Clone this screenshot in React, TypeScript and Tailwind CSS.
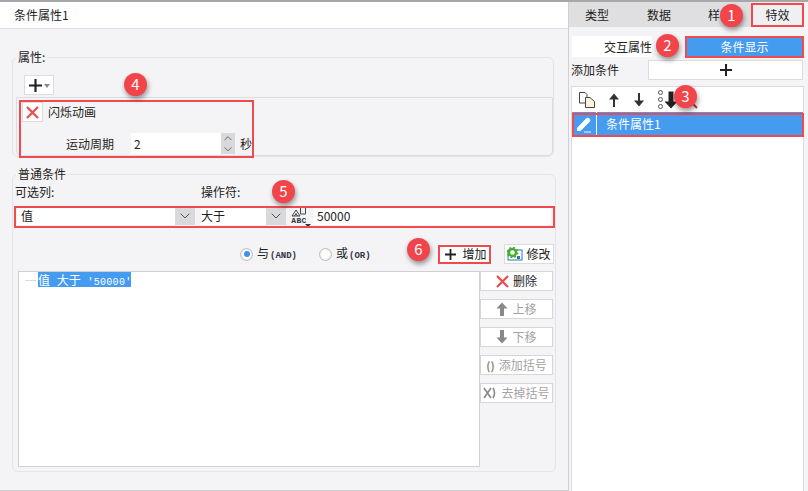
import { ChevronDown, ChevronUp } from "lucide-react";
import type { ReactNode } from "react";

const FONT = { fontFamily: '"Noto Sans CJK SC", "Liberation Sans", sans-serif' };
const MONO = { fontFamily: '"Liberation Mono", monospace' };

const BADGES = [
  { n: 1, cls: "left-[720px] top-[4px]" },
  { n: 2, cls: "left-[656px] top-[34px]" },
  { n: 3, cls: "left-[674px] top-[85px]" },
  { n: 4, cls: "left-[124px] top-[73px]" },
  { n: 5, cls: "left-[272px] top-[180px]" },
  { n: 6, cls: "left-[407px] top-[238px]" },
];

const RED_BOXES = [
  "left-[751px] top-[3px] w-[53px] h-[24px]",
  "left-[685px] top-[36px] w-[119px] h-[22px]",
  "left-[572px] top-[113px] w-[232px] h-[24px]",
  "left-[19px] top-[100px] w-[235px] h-[58px]",
  "left-[14px] top-[206px] w-[541px] h-[22px]",
  "left-[438px] top-[245px] w-[53px] h-[19px]",
];

function Cross({ size = 12 }: { size?: number }) {
  return (
    <svg width={size} height={size} viewBox="0 0 12 12">
      <path d="M6 0 V12 M0 6 H12" stroke="#222" strokeWidth="2" />
    </svg>
  );
}

function RedX({ size = 13 }: { size?: number }) {
  return (
    <svg width={size} height={size} viewBox="0 0 13 13">
      <path d="M1 1 L12 12 M12 1 L1 12" stroke="#ee4b4b" strokeWidth="2.2" />
    </svg>
  );
}

function ArrowUp({ color = "#333", thin }: { color?: string; thin?: boolean }) {
  return (
    <svg width="12" height="14" viewBox="0 0 12 14">
      <path d={thin ? "M6 0.5 L11 6.5 H7 V14 H5 V6.5 H1 Z" : "M6 0.5 L11.5 6.5 H8 V14 H4 V6.5 H0.5 Z"} fill={color} />
    </svg>
  );
}

function ArrowDown({ color = "#333", thin }: { color?: string; thin?: boolean }) {
  return (
    <svg width="12" height="14" viewBox="0 0 12 14">
      <path d={thin ? "M6 13.5 L11 7.5 H7 V0 H5 V7.5 H1 Z" : "M6 13.5 L11.5 7.5 H8 V0 H4 V7.5 H0.5 Z"} fill={color} />
    </svg>
  );
}

function SideButton({ icon, label, off }: { icon: ReactNode; label: string; off?: boolean }) {
  return (
    <div
      className={`flex h-[20px] w-[73px] items-center justify-center gap-[4px] border border-[#d6d6d9] bg-white text-[12px] ${
        off ? "text-[#a3a3a3]" : "text-[#222]"
      }`}
    >
      {icon}
      <span>{label}</span>
    </div>
  );
}

function Group({ title, className, children }: { title: string; className: string; children: ReactNode }) {
  return (
    <div className={`relative rounded-[6px] border border-[#e4e4e7] ${className}`}>
      <span className="absolute left-[3px] top-[-9px] bg-[#f4f4f6] px-[2px] text-[12px] leading-[16px] text-[#222]">
        {title}
      </span>
      {children}
    </div>
  );
}

function SelectBox({ value, className }: { value: string; className: string }) {
  return (
    <div className={`flex h-[19px] items-center justify-between bg-white text-[12px] text-[#222] ${className}`}>
      <span>{value}</span>
      <div className="flex h-full w-[20px] items-center justify-center bg-[#d9d9dc]">
        <ChevronDown size={16} strokeWidth={1.5} className="text-[#555]" />
      </div>
    </div>
  );
}

function Radio({ on }: { on?: boolean }) {
  return (
    <div className="flex h-[13px] w-[13px] items-center justify-center rounded-full border border-[#bdbdbd] bg-[radial-gradient(circle,#ffffff_40%,#e2e2e4)]">
      {on && <span className="h-[6px] w-[6px] rounded-full bg-[#3f90ec]" />}
    </div>
  );
}

export default function App() {
  return (
    <div style={FONT} className="relative flex h-[491px] w-[808px] flex-col overflow-hidden bg-[#f4f4f6]">
      <div className="h-[2px] bg-[#a8a8a8]" />
      <div className="flex flex-1">
        {/* left panel */}
        <div className="flex w-[569px] flex-col border-b border-r border-[#d0d0d3]">
          <div className="flex h-[27px] items-center border-b border-[#dcdcdf] bg-white pl-[14px] text-[12px] text-[#222]">
            条件属性1
          </div>
          <div className="px-[12px] pt-[28px]">
            <Group title="属性:" className="h-[100px] w-[542px]">
              <div className="ml-[11px] mt-[17px] flex h-[20px] w-[30px] items-center justify-center border border-[#dcdcdf] bg-white">
                <Cross size={13} />
                <span className="ml-[2px] mt-[1px] h-0 w-0 border-x-[3px] border-t-[4px] border-x-transparent border-t-[#888]" />
              </div>
              <div className="mt-[2px] ml-[3px] h-[59px] rounded-b-[5px] border border-[#dcdcdf]">
                <div className="flex items-center pl-[5px] pt-[4px]">
                  <div className="flex h-[20px] w-[21px] items-center justify-center border border-[#dcdcdf] bg-white">
                    <RedX />
                  </div>
                  <span className="ml-[5px] text-[12px] text-[#222]">闪烁动画</span>
                </div>
                <div className="mt-[11px] flex items-center pl-[49px] text-[12px] text-[#222]">
                  <span className="w-[65px]">运动周期</span>
                  <div className="flex h-[21px] w-[104px] items-center justify-between bg-white">
                    <span className="pl-[3px]">2</span>
                    <div className="flex h-full w-[14px] flex-col items-center justify-center bg-[#d9d9dc]">
                      <ChevronUp size={14} strokeWidth={1.6} className="-my-[1px] text-[#555]" />
                      <ChevronDown size={14} strokeWidth={1.6} className="-my-[1px] text-[#555]" />
                    </div>
                  </div>
                  <span className="ml-[5px]">秒</span>
                </div>
              </div>
            </Group>

            <Group title="普通条件" className="mt-[17px] h-[298px] w-[544px]">
              <div className="flex pl-[2px] pt-[9px] text-[12px] leading-[16px] text-[#222]">
                <span className="w-[186px]">可选列:</span>
                <span>操作符:</span>
              </div>
              <div className="mt-[6px] flex items-center pl-[4px]">
                <SelectBox value="值" className="w-[178px] pl-[4px]" />
                <SelectBox value="大于" className="ml-[6px] w-[85px]" />
                <div className="relative flex h-[19px] w-[26px] flex-col items-center justify-center text-[#333]">
                  <svg width="16" height="10" viewBox="0 0 16 10">
                    <path d="M1 9 L5 3 L9 9 Z M3.5 9 L5 6.5 L6.5 9" fill="none" stroke="#444" />
                    <path d="M9.5 1 V7 H14.5 V1" fill="none" stroke="#444" />
                  </svg>
                  <span style={MONO} className="text-[8px] font-bold leading-[7px] tracking-[0.4px]">
                    ABC
                  </span>
                  <span className="absolute bottom-[-2px] right-[1px] h-0 w-0 border-x-[3px] border-t-[3px] border-x-transparent border-t-[#333]" />
                </div>
                <div className="ml-[1px] flex h-[19px] w-[238px] items-center bg-white pl-[4px] text-[12px] text-[#222]">
                  50000
                </div>
              </div>

              <div className="mt-[19px] flex h-[20px] items-center text-[12px] text-[#222]">
                <div className="ml-[227px]">
                  <Radio on />
                </div>
                <span className="ml-[4px] w-[62px]">
                  与<span style={MONO} className="ml-[1px] text-[9px] font-bold text-[#334]">(AND)</span>
                </span>
                <Radio />
                <span className="ml-[4px] w-[104px]">
                  或<span style={MONO} className="ml-[1px] text-[9px] font-bold text-[#334]">(OR)</span>
                </span>
                <div className="flex h-[20px] w-[52px] items-center justify-center gap-[6px] bg-white">
                  <Cross size={11} />
                  <span>增加</span>
                </div>
                <div className="ml-[12px] flex h-[20px] w-[50px] items-center justify-center gap-[3px] border border-[#dcdcdf] bg-white">
                  <svg width="16" height="14" viewBox="0 0 16 14">
                    <rect x="1" y="3" width="14" height="10" fill="#fff" stroke="#2f73b8" />
                    <rect x="10" y="9" width="3" height="3" fill="#2f73b8" />
                    <circle cx="5.5" cy="5.5" r="3.5" fill="#fff" stroke="#43b02a" strokeWidth="2.4" />
                    <circle cx="5.5" cy="5.5" r="5" fill="none" stroke="#43b02a" strokeWidth="1.6" strokeDasharray="2 1.9" />
                  </svg>
                  <span>修改</span>
                </div>
              </div>

              <div className="mt-[7px] flex pl-[5px]">
                <div className="flex h-[196px] w-[462px] items-start border border-[#d0d0d3] bg-white text-[12px]">
                  <span className="ml-[6px] mr-[2px] mt-[8px] h-px w-[11px] bg-[#dcdcdf]" />
                  <span className="block h-[15px] w-[93px] whitespace-pre bg-[#459bf0] leading-[15px] text-white [word-spacing:4px]">
                    值 大于 <span style={MONO} className="text-[10px] tracking-[0.3px]">'50000'</span>
                  </span>
                </div>
                <div className="flex flex-col gap-[8px]">
                  <SideButton icon={<RedX />} label="删除" />
                  <SideButton icon={<ArrowUp color="#888" />} label="上移" off />
                  <SideButton icon={<ArrowDown color="#888" />} label="下移" off />
                  <SideButton
                    icon={<span className="text-[11px] font-bold text-[#888]">()</span>}
                    label="添加括号"
                    off
                  />
                  <SideButton
                    icon={
                      <svg width="14" height="12" viewBox="0 0 14 12">
                        <path d="M1 1 L8 11 M8 1 L1 11 M10 1 Q13 6 10 11" fill="none" stroke="#888" strokeWidth="1.6" />
                      </svg>
                    }
                    label="去掉括号"
                    off
                  />
                </div>
              </div>
            </Group>
          </div>
        </div>

        {/* right panel */}
        <div className="flex w-[235px] flex-col text-[12px] text-[#222]">
          <div className="flex h-[25px] items-center bg-[#dfdfe2] pl-[3px]">
            <span className="w-[50px] text-center">类型</span>
            <span className="w-[74px] text-center">数据</span>
            <span className="w-[48px] text-center">样式</span>
            <span className="ml-[7px] flex h-full w-[53px] items-center justify-center bg-[#f0f0f2]">特效</span>
          </div>
          <div className="ml-[3px] mt-[9px] flex h-[21px] items-center">
            <span className="w-[80px] bg-white text-right leading-[21px]">交互属性</span>
            <div className="ml-[33px] flex h-full w-[119px] items-center justify-center bg-[#459bf0] text-white">
              条件显示
            </div>
          </div>
          <div className="ml-[2px] mt-[3px] flex h-[20px] items-center">
            <span className="w-[77px]">添加条件</span>
            <div className="flex h-full w-[155px] items-center justify-center border border-[#dcdcdf] bg-white">
              <Cross />
            </div>
          </div>
          <div className="ml-[2px] mt-[6px] flex-1 border border-b-0 border-[#dcdcdf] bg-white">
            <div className="flex h-[25px] items-center gap-[13px] pl-[7px]">
              <svg width="16" height="16" viewBox="0 0 16 16">
                <path d="M0.5 0.5 H6 L8 2.5 V11 H0.5 Z" fill="#fff" stroke="#444" />
                <path d="M6.5 5.5 H11 L15.5 9.5 V15.5 H6.5 Z" fill="#fdf3dc" stroke="#444" />
              </svg>
              <ArrowUp thin />
              <ArrowDown thin />
              <div className="flex items-center">
                <div className="flex flex-col gap-[2px]">
                  <span className="h-[5px] w-[5px] rounded-full border border-[#555]" />
                  <span className="h-[5px] w-[5px] rounded-full border border-[#555]" />
                  <span className="h-[5px] w-[5px] rounded-full border border-[#555]" />
                </div>
                <svg width="14" height="18" viewBox="0 0 14 18" className="ml-[1px]">
                  <path d="M7 17.5 L13.5 10.5 H9.5 V0.5 H4.5 V10.5 H0.5 Z" fill="#222" />
                </svg>
                <svg width="20" height="18" viewBox="0 0 20 18" className="ml-[1px]">
                  <circle cx="8" cy="8" r="6" fill="none" stroke="#888" strokeWidth="1.5" />
                  <path d="M14 13 L18 17" stroke="#c0392b" strokeWidth="2" />
                </svg>
              </div>
            </div>
            <div className="flex h-[24px] items-center bg-[#459bf0] text-white">
              <div className="flex h-full w-[25px] items-center justify-center border-r border-white">
                <svg width="16" height="17" viewBox="0 0 16 17">
                  <path d="M1 12 L10 2.5 Q12 1 14 3 Q15 5 13.5 6 L4.5 15 H1 Z" fill="#fff" />
                  <path d="M8 16 H15" stroke="#fff" />
                </svg>
              </div>
              <span className="ml-[9px]">条件属性1</span>
            </div>
          </div>
        </div>
      </div>

      {RED_BOXES.map((c) => (
        <div key={c} className={`absolute border-2 border-[#f04a4f] ${c}`} />
      ))}
      {BADGES.map((b) => (
        <div
          key={b.n}
          className={`absolute flex h-[23px] w-[23px] items-center justify-center rounded-full bg-[#f1454b] text-[15px] text-white shadow-[1px_3px_5px_rgba(0,0,0,0.4)] ${b.cls}`}
        >
          {b.n}
        </div>
      ))}
    </div>
  );
}
